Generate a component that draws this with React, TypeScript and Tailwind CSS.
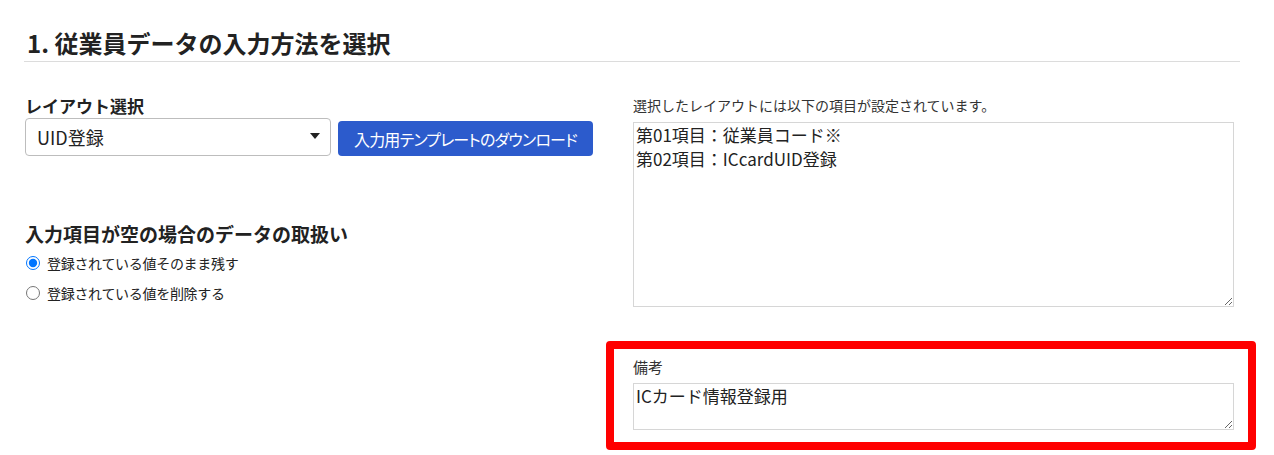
import { useState } from 'react';

const FONT = '"Noto Sans CJK JP", "Noto Sans", sans-serif';

type EmptyMode = 'keep' | 'delete';

export default function App() {
  const [mode, setMode] = useState<EmptyMode>('keep');

  return (
    <div
      className="min-h-[455px] bg-white pt-[28px] text-[#222]"
      style={{ fontFamily: FONT }}
    >
      <div className="ml-[24px] w-[1216px]">
        {/* 見出し */}
        <h1 className="border-b border-[#dcdcdc] pb-[3px] pl-[3px] text-[24px] font-bold leading-[30px]">
          1. 従業員データの入力方法を選択
        </h1>

        <div className="mt-[34px] flex pl-[1px]">
          {/* 左カラム */}
          <div className="w-[568px]">
            <p className="text-[17px] font-bold leading-[20px]">レイアウト選択</p>
            <div className="mt-[2px] flex items-end gap-[7px]">
              <div className="relative w-[306px]">
                <select
                  defaultValue="uid"
                  className="h-[38px] w-full appearance-none rounded-[4px] border border-[#bdbdbd] bg-white pl-[11px] text-[18px] leading-[22px] text-[#222] outline-none"
                  style={{ fontFamily: FONT }}
                >
                  <option value="uid">UID登録</option>
                </select>
                <svg
                  className="pointer-events-none absolute right-[11px] top-[15px]"
                  width="10"
                  height="6"
                  viewBox="0 0 10 6"
                >
                  <path d="M0 0h10L5 6z" fill="#222" />
                </svg>
              </div>
              <button
                type="button"
                className="h-[35px] w-[255px] whitespace-nowrap rounded-[4px] bg-[#2c5bcc] text-[16px] leading-[20px] tracking-[-0.8px] text-white [font-feature-settings:'palt']"
              >
                入力用テンプレートのダウンロード
              </button>
            </div>

            <p className="mt-[67px] text-[19px] font-bold leading-[22px]">
              入力項目が空の場合のデータの取扱い
            </p>
            <div className="mt-[3px]">
              <label className="flex h-[30px] items-center gap-[7px] text-[14px] leading-[20px] tracking-[-0.3px]">
                <input
                  type="radio"
                  name="empty"
                  checked={mode === 'keep'}
                  onChange={() => setMode('keep')}
                  className="ml-[1px] h-[14px] w-[14px]"
                />
                登録されている値そのまま残す
              </label>
              <label className="flex h-[30px] items-center gap-[7px] text-[14px] leading-[20px] tracking-[-0.3px]">
                <input
                  type="radio"
                  name="empty"
                  checked={mode === 'delete'}
                  onChange={() => setMode('delete')}
                  className="ml-[1px] h-[14px] w-[14px]"
                />
                登録されている値を削除する
              </label>
            </div>
          </div>

          {/* 右カラム */}
          <div className="ml-[40px] w-[601px]">
            <p className="text-[14px] leading-[18px] text-[#333]">
              選択したレイアウトには以下の項目が設定されています。
            </p>
            <textarea
              readOnly
              defaultValue={'第01項目：従業員コード※\n第02項目：ICcardUID登録'}
              className="mt-[8px] block h-[185px] w-full resize-y border border-[#d6d6d6] px-[2px] text-[17px] leading-[24px] text-[#222] outline-none"
              style={{ fontFamily: FONT }}
            />

            {/* 備考 (赤枠) */}
            <div className="-ml-[27px] -mr-[22px] mt-[34px] rounded-[4px] border-[8px] border-[#ff0000] pb-[12px] pl-[19px] pr-[14px] pt-[8px]">
              <p className="text-[15px] leading-[20px] text-[#333]">備考</p>
              <textarea
                defaultValue="ICカード情報登録用"
                className="mt-[6px] block h-[47px] w-full resize-y border border-[#d6d6d6] px-[2px] text-[17px] leading-[24px] text-[#222] outline-none"
                style={{ fontFamily: FONT }}
              />
            </div>
          </div>
        </div>
      </div>
    </div>
  );
}
